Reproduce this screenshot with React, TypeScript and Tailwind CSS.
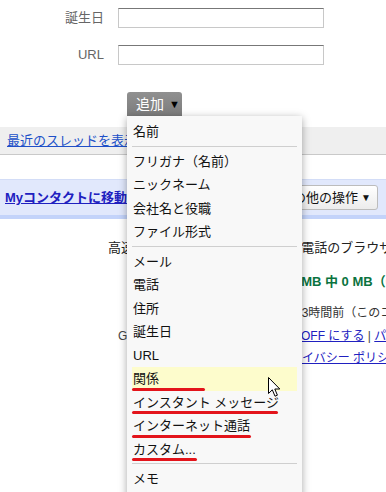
import React from "react";

const font = "font-['Liberation_Sans','Noto_Sans_CJK_JP',sans-serif]";

type Item = { label: string; hover?: boolean; mark?: number };

const groups: Item[][] = [
  [{ label: "名前" }],
  [
    { label: "フリガナ（名前）" },
    { label: "ニックネーム" },
    { label: "会社名と役職" },
    { label: "ファイル形式" },
  ],
  [
    { label: "メール" },
    { label: "電話" },
    { label: "住所" },
    { label: "誕生日" },
    { label: "URL" },
    { label: "関係", hover: true, mark: 73 },
    { label: "インスタント メッセージ", mark: 146 },
    { label: "インターネット通話", mark: 119 },
    { label: "カスタム...", mark: 65 },
  ],
  [{ label: "メモ" }],
];

function FieldRow({ label }: { label: string }) {
  return (
    <div className="flex items-center gap-[14px]">
      <div className="w-[104px] text-right text-[13px] text-[#666]">{label}</div>
      <input className="h-[20px] w-[206px] border border-[#c8c8c8] border-t-[#777] bg-white outline-none" />
    </div>
  );
}

function AddMenu() {
  return (
    <div className="absolute left-0 top-full z-10 w-[175px] bg-[#f8f8f8] px-[5px] pt-[4px] pb-[10px] shadow-[0_2px_8px_rgba(0,0,0,0.35)]">
      {groups.map((g, gi) => (
        <div key={gi}>
          {gi > 0 && <div className="mt-[2px] mb-[3px] h-px bg-[#cfcfcf]" />}
          {g.map((it) => (
            <div
              key={it.label}
              className={
                "relative flex h-[23.5px] items-center pl-px text-[13px] text-[#111] " +
                (it.hover ? "bg-[#fdfccc]" : "")
              }
            >
              {it.label}
              {it.mark && (
                <span
                  className="absolute bottom-0 left-0 h-[3px] rounded-full bg-[#e3141b]"
                  style={{ width: it.mark }}
                />
              )}
            </div>
          ))}
        </div>
      ))}
    </div>
  );
}

export default function App() {
  return (
    <div className={"relative h-[492px] w-[386px] overflow-hidden bg-white " + font}>
      <div className="flex flex-col gap-[17px] pt-[8px]">
        <FieldRow label="誕生日" />
        <FieldRow label="URL" />
      </div>

      <div className="relative ml-[127px] mt-[27px] w-fit">
        <button className="flex h-[24px] w-[55px] items-center gap-[5px] rounded-t-[3px] bg-linear-to-b from-[#909090] to-[#7c7c7c] pl-[9px] text-[14px] text-white">
          追加
          <span className="text-[11px] text-black">▼</span>
        </button>
        <AddMenu />
      </div>

      <div className="mt-[11px] flex h-[28px] items-center border-b border-[#c9c9c9] bg-[#efefef] pl-[7px]">
        <a className="text-[13px] text-[#2050c8] underline">最近のスレッドを表示</a>
      </div>

      <div className="mt-[24px] border-t border-[#d3ddf7] bg-[#e1e8fc]">
        <div className="flex h-[35px] items-center justify-between pl-[5px] pr-[8px]">
          <a className="text-[13px] font-bold text-[#2020c0] underline">Myコンタクトに移動</a>
          <button className="flex h-[25px] items-center gap-[3px] rounded-[3px] border border-[#bcbcbc] bg-linear-to-b from-white to-[#ececec] px-[6px] text-[13px] text-[#111]">
            その他の操作
            <span className="text-[10px]">▼</span>
          </button>
        </div>
        <div className="h-[4px] bg-[#c3d3fa]" />
      </div>

      <div className="mt-[19px] pl-[108px] text-[13px] leading-[20px] whitespace-nowrap text-[#222]">
        高速なモバイル版 Gmail を携帯<span className="ml-[9px]">電話のブラウザで利用できます</span>
      </div>
      <div className="mt-[14px] pl-[239px] text-[13px] font-bold leading-[20px] whitespace-nowrap text-[#0a7340]">
        現在 7435 MB 中 0 MB（0%）を使用中です
      </div>
      <div className="mt-[11px] pl-[213px] text-[12px] leading-[20px] whitespace-nowrap text-[#333]">
        アクティビティ: 3時間前（このコンピュータ）
      </div>
      <div className="mt-[3px] pl-[118px] text-[12px] leading-[20px] whitespace-nowrap text-[#444]">
        Gmail ビュー: 標準 | チャット機能
        <a className="text-[#2020c0] underline">OFF にする</a> |{" "}
        <a className="text-[#2020c0] underline">パスワード</a>
      </div>
      <div className="mt-[2px] pl-[132px] text-[12px] leading-[20px] whitespace-nowrap text-[#444]">
        ©2011 Google - 利用規約 -{" "}
        <a className="text-[#2020c0] underline">プライバシー ポリシー</a>
      </div>

      <svg
        className="absolute left-[268px] top-[377px] z-20"
        width="13"
        height="21"
        viewBox="0 0 13 21"
      >
        <path
          d="M0.5 0.5 L0.5 16.5 L4.3 12.8 L7 19.2 L9.4 18.2 L6.8 12 L11.8 12 Z"
          fill="white"
          stroke="black"
          strokeWidth="1"
        />
      </svg>
    </div>
  );
}
